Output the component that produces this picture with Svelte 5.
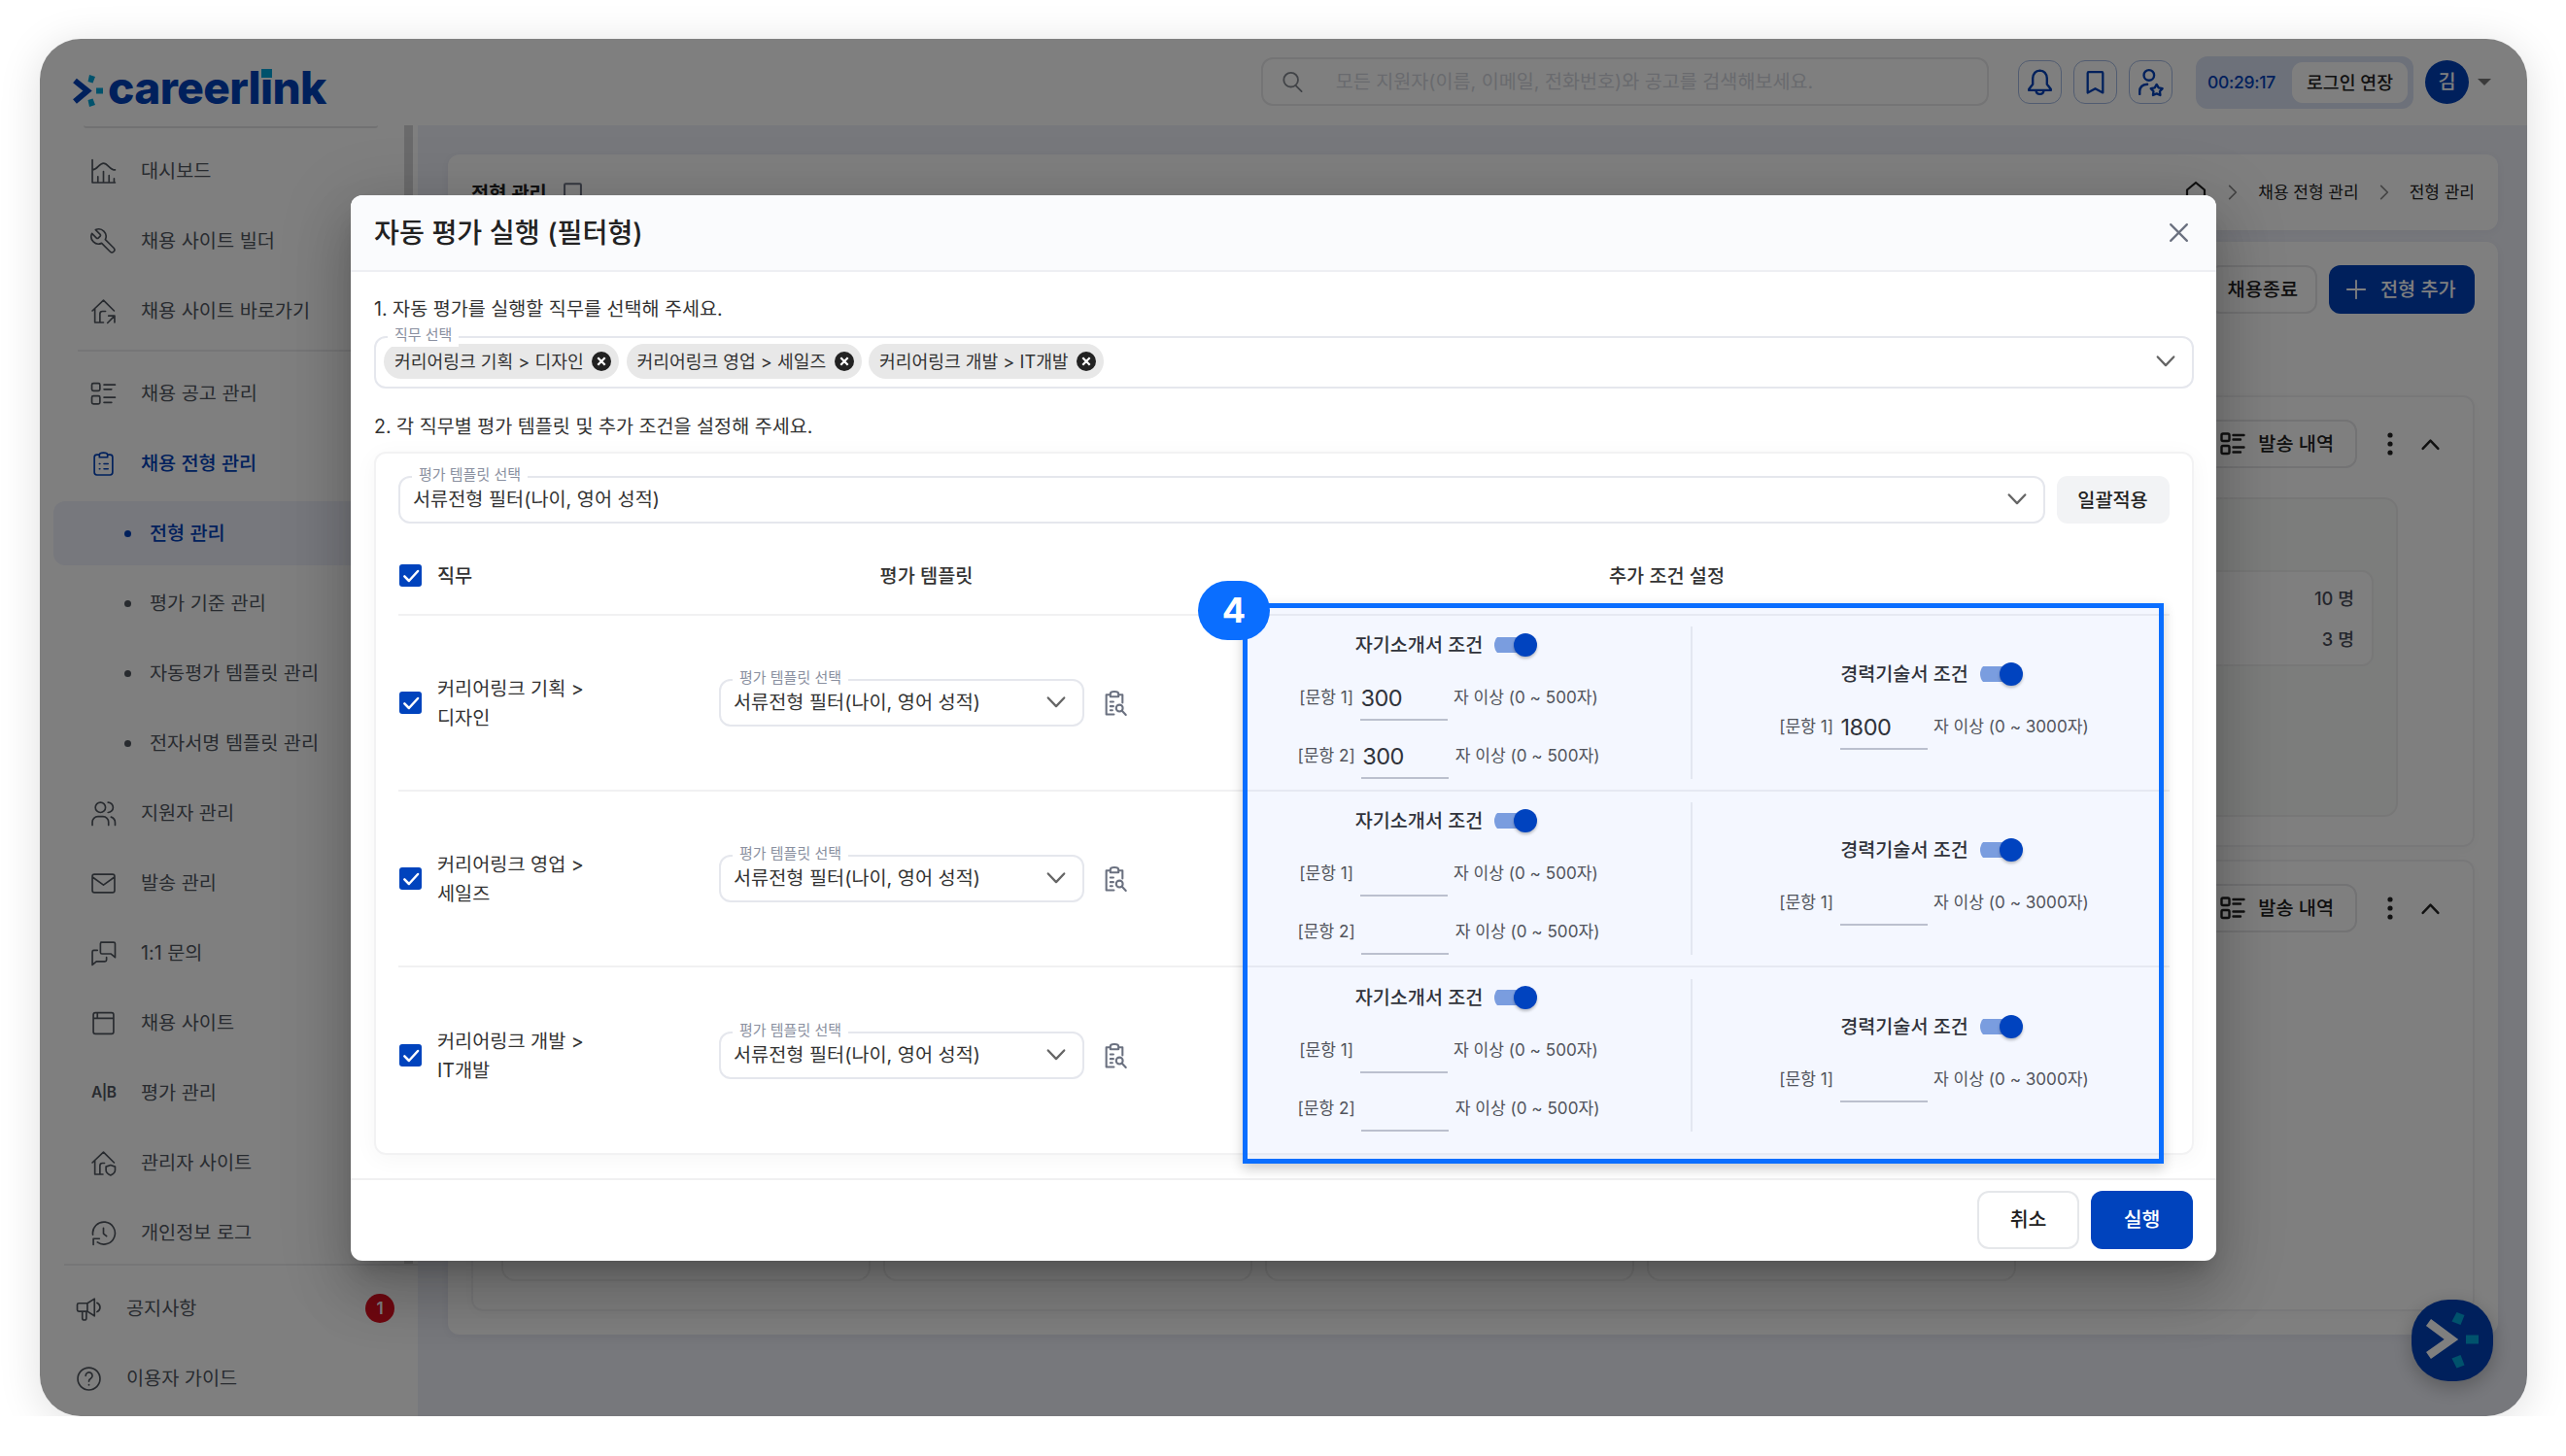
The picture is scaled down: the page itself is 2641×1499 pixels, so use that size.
<script lang="ts">
	type MenuItem = { label: string; icon: string; arrow?: "down" | "up"; active?: boolean };
	type Field = { label: string; value: string };
	type Job = { name: string; group: string; intro: Field[]; career: Field[] };

	const icons: Record<string, string> = {
		chart: "M1 .5V23h22.5M1 10.5C6 10.500 7.500 4 12 4s6 6.500 11.500 6.500M6.500 23v-6M12 23V12M17.500 23v-7M22.500 23v-4",
		wrench: "M8.760 5.160a1.200 1.200 0 0 1 0 1.700L6.840 8.760a1.200 1.200 0 0 1-1.700 0L.6 4.200a7.200 7.200 0 0 0 9.600 9.600l8.300 8.300a2.500 2.500 0 0 0 3.600-3.600l-8.300-8.300a7.200 7.200 0 0 0-9.600-9.600z",
		homeLink: "M1 11.500 12 1l10.500 10.500M3.500 9.500v13.500h8.500M8.500 22.500v-8q0-2.500 2.500-2.500h3M16 23.500l7-7M17 16.500h6v6.500",
		list: "M2 1.500h5q1.500 0 1.500 1.500v4.500q0 1.500-1.500 1.500h-5q-1.500 0-1.500-1.500v-4.500q0-1.500 1.500-1.500zM2 14h5q1.500 0 1.500 1.500v5q0 1.500-1.500 1.500h-5q-1.500 0-1.500-1.500v-5q0-1.500 1.500-1.500zM12.500 3h11M12.500 7.500h7.500M12.500 15.500h11M12.500 20.500h7.500",
		clipboard: "M8 3H5.500Q3 3 3 5.500v15Q3 23 5.500 23h13q2.500 0 2.500-2.500v-15Q21 3 18.500 3H16M8 5.500V3q0-2 4-2t4 2v2.500zM8 12h.5M8 17h.5M12.500 12h4M12.500 17h4",
		users: "M9 1a5 5 0 1 0 0 10a5 5 0 1 0 0-10M1 23.500v-3a5.500 5.500 0 0 1 5.500-5.500h5a5.500 5.500 0 0 1 5.500 5.500v3M16.500 1a5 5 0 0 1 0 10M19.500 15.500q4 1.500 4 5.500v2.500",
		mail: "M3 3h18q2 0 2 2v14q0 2-2 2h-18q-2 0-2-2v-14q0-2 2-2zM1.500 6l10.500 7.500l10.500-7.500",
		chat: "M9.500 1h12.500q1.500 0 1.500 1.500v13.500l-4-3.500h-9q-1.500 0-1.500-1.500v-8.500q0-1.500 1.500-1.500M6 9h-3.500q-1.500 0-1.500 1.500v13l4-3.500h8.500q1.500 0 1.500-1.500v-2.500",
		window: "M4 1.500h16q2 0 2 2v17q0 2-2 2h-16q-2 0-2-2v-17q0-2 2-2zM2 7h20M6 1.500V7",
		homeShield: "M1 11.500 12 1l10.500 10.500M3.500 9.500v13.500h8M8.500 22.500v-8q0-2.500 2.500-2.500h2M19 14l4.500 1.500v3.500q0 3-4.500 5q-4.500-2-4.500-5v-3.500z",
		history: "M1.500 13.500a11 11 0 1 1 4.500 7.500M12 7v5.500l3 2.500M2 23.500v-6h6",
		horn: "M2 6.500h8.500l7-4.500v17l-7-4.500h-8.500q-1.500 0-1.500-1.500v-5q0-1.500 1.500-1.500zM10.500 6.500v8M20 6q3 1.500 3 4.500t-3 4.500M5.500 14.500v6.500q0 2 2 2t2-2v-6.500",
		help: "M12 1a11 11 0 1 0 0 22a11 11 0 1 0 0-22M8.800 9a3.300 3.300 0 1 1 5 2.800q-1.800 1-1.800 2.700M12 17.800v.4",
		bell: "M12 1.500q-6 .5-6.500 7v5.500L2 18.500v1h20v-1L18.500 14V8.500q-.5-6.500-6.500-7zM8.500 19.500q0 3.500 3.500 3.500t3.500-3.500",
		bookmark: "M5.500 2h13q1 0 1 1v19.500L12 18.500l-7.500 4V3q0-1 1-1z",
		userStar: "M10.500 1a4.700 4.700 0 1 0 0 9.400a4.700 4.700 0 1 0 0-9.400M2 23v-2.500q0-6 7-6.500M17.500 14.200l1.800 3 3.500.7-2.400 2.600.4 3.500-3.300-1.500-3.300 1.500.4-3.500-2.400-2.600 3.500-.7z",
		search: "M10.500 2a8 8 0 1 0 0 16a8 8 0 1 0 0-16M16.500 17l6 6",
		preview: "M7 4H3.500v19.500H11M16 4h3.500v8M7.500 6V3q0-2 4-2t4 2v3zM7.500 11h3M7.500 15.500h3M7.500 19.500h2M16.500 14a3.300 3.300 0 1 0 0 6.600a3.300 3.300 0 1 0 0-6.600M19 20l3.800 4",
		home: "M3 24V9.500L12 2l9 7.500V24z",
		plus: "M12 2v20M2 12h20",
		close: "M4 4l16 16M20 4L4 20",
		down: "M3 7l9 9.500L21 7",
		up: "M3 17l9-9.500 9 9.500",
		right: "M8 4l8 8-8 8",
		check: "M4 12.500l5.500 5.500L20.500 6",
	};

	const topMenu: MenuItem[] = [
		{ label: "대시보드", icon: "chart" },
		{ label: "채용 사이트 빌더", icon: "wrench" },
		{ label: "채용 사이트 바로가기", icon: "homeLink" },
	];
	const processMenu: MenuItem[] = [
		{ label: "채용 공고 관리", icon: "list", arrow: "down" },
		{ label: "채용 전형 관리", icon: "clipboard", arrow: "up", active: true },
	];
	const subMenu = ["전형 관리", "평가 기준 관리", "자동평가 템플릿 관리", "전자서명 템플릿 관리"];
	const manageMenu: MenuItem[] = [
		{ label: "지원자 관리", icon: "users", arrow: "down" },
		{ label: "발송 관리", icon: "mail", arrow: "down" },
		{ label: "1:1 문의", icon: "chat", arrow: "down" },
		{ label: "채용 사이트", icon: "window", arrow: "down" },
		{ label: "평가 관리", icon: "ab", arrow: "down" },
		{ label: "관리자 사이트", icon: "homeShield", arrow: "down" },
		{ label: "개인정보 로그", icon: "history", arrow: "down" },
	];

	const template = "서류전형 필터(나이, 영어 성적)";
	let jobs: Job[] = $state([
		{
			group: "커리어링크 기획",
			name: "디자인",
			intro: [{ label: "[문항 1]", value: "300" }, { label: "[문항 2]", value: "300" }],
			career: [{ label: "[문항 1]", value: "1800" }],
		},
		{
			group: "커리어링크 영업",
			name: "세일즈",
			intro: [{ label: "[문항 1]", value: "" }, { label: "[문항 2]", value: "" }],
			career: [{ label: "[문항 1]", value: "" }],
		},
		{
			group: "커리어링크 개발",
			name: "IT개발",
			intro: [{ label: "[문항 1]", value: "" }, { label: "[문항 2]", value: "" }],
			career: [{ label: "[문항 1]", value: "" }],
		},
	]);
</script>

{#snippet icon(name: string, size = 24, stroke = 1.6)}
	<svg class="icon" width={size} height={size} viewBox="0 0 24 24" stroke-width={stroke}>
		<path d={icons[name]} />
	</svg>
{/snippet}

{#snippet menuRow(item: MenuItem)}
	<div class="menuItem" class:active={item.active}>
		{#if item.icon == "ab"}
			<span class="abIcon">A|B</span>
		{:else}
			{@render icon(item.icon, 25)}
		{/if}
		<span class="menuLabel">{item.label}</span>
		{#if item.arrow}
			{@render icon(item.arrow, 18, 2)}
		{/if}
	</div>
{/snippet}

{#snippet cardTools()}
	<div class="tools">
		<button class="outlineBtn historyBtn">{@render icon("list", 24, 2.4)}발송 내역</button>
		<svg class="dots" width="6" height="24" viewBox="0 0 6 24"><circle cx="3" cy="3" r="2.6" /><circle cx="3" cy="12" r="2.6" /><circle cx="3" cy="21" r="2.6" /></svg>
		{@render icon("up", 21, 2.8)}
	</div>
{/snippet}

{#snippet checkbox()}
	<span class="checkbox">{@render icon("check", 20, 3)}</span>
{/snippet}

{#snippet condition(title: string, fields: Field[], max: number)}
	<div class="condition">
		<div class="conditionTitle">
			{title}
			<span class="switch"><span class="thumb"></span></span>
		</div>
		{#each fields as field}
			<div class="field">
				<span>{field.label}</span>
				<input class="fieldInput" bind:value={field.value} />
				<span>자 이상 (0 ~ {max}자)</span>
			</div>
		{/each}
	</div>
{/snippet}

<div class="frame">
	<header class="topbar">
		<div class="logo">
			<svg width="32" height="36" viewBox="0 0 32 36">
				<path d="M2 8L15 18.500L2 29.500" fill="none" stroke="#0041b9" stroke-width="6" />
				<path d="M17 2l6 2-2.500 6.500-5-1.500zM24 15.500h7v6h-7zM15.500 28l5-1.500 2.500 6.500-6 2z" fill="#00a5d8" />
			</svg>
			<span class="logoText">careerl<span class="logoI">i</span>nk</span>
		</div>
		<div class="search">
			{@render icon("search", 22, 2)}
			<span>모든 지원자(이름, 이메일, 전화번호)와 공고를 검색해보세요.</span>
		</div>
		<div class="quick">
			<button class="quickBtn">{@render icon("bell", 27, 2.1)}</button>
			<button class="quickBtn">{@render icon("bookmark", 25, 2.2)}</button>
			<button class="quickBtn">{@render icon("userStar", 27, 2.1)}</button>
		</div>
		<div class="session">
			<span class="timer">00:29:17</span>
			<button class="extend">로그인 연장</button>
		</div>
		<span class="avatar">김</span>
		<span class="caret"></span>
	</header>

	<div class="layout">
		<aside class="sidebar">
			<div class="scrollArea">
				<div class="boxEnd"></div>
				<nav class="menu">
					{#each topMenu as item}
						{@render menuRow(item)}
					{/each}
					<hr />
					{#each processMenu as item}
						{@render menuRow(item)}
					{/each}
					{#each subMenu as label, i}
						<div class="subItem" class:selected={i == 0}><span class="bullet"></span>{label}</div>
					{/each}
					{#each manageMenu as item}
						{@render menuRow(item)}
					{/each}
				</nav>
				<span class="scrollbar"></span>
			</div>
			<div class="sideFooter">
				<div class="menuItem">{@render icon("horn", 25)}<span class="menuLabel">공지사항</span><span class="count">1</span></div>
				<div class="menuItem">{@render icon("help", 25)}<span class="menuLabel">이용자 가이드</span></div>
			</div>
		</aside>

		<main class="content">
			<section class="card pageHead">
				<h2>전형 관리</h2>
				<span class="pageMark">{@render icon("bookmark", 27, 1.8)}</span>
				<div class="crumbs">
					{@render icon("home", 24, 2.2)}
					<span class="crumbArrow">{@render icon("right", 20, 2)}</span>
					<span>채용 전형 관리</span>
					<span class="crumbArrow">{@render icon("right", 20, 2)}</span>
					<span>전형 관리</span>
				</div>
			</section>
			<section class="card pageBody">
				<div class="toolbar">
					<button class="outlineBtn">채용종료</button>
					<button class="addBtn">{@render icon("plus", 22, 2)}전형 추가</button>
				</div>
				<div class="stage">
					{@render cardTools()}
					<div class="boxes">
						{#each Array(4) as _}
							<div class="box"></div>
						{/each}
						<div class="box green">
							<div class="counts"><span>10 명</span><span>3 명</span></div>
						</div>
					</div>
				</div>
				<div class="stage">
					{@render cardTools()}
					<div class="boxes">
						{#each Array(4) as _}
							<div class="box"></div>
						{/each}
					</div>
				</div>
			</section>
		</main>
	</div>

	<div class="chatBtn">
		<svg width="84" height="84" viewBox="0 0 84 84">
			<path d="M17.500 23.500L41 41L17.500 57.500" fill="none" stroke="#fff" stroke-width="8.500" />
			<path d="M46.500 13l8 3-4 10-9-3.500zM56 36.500h13v9h-13zM41.500 60.500l9-3.500 4 10.500-8 3z" fill="#00a5d8" />
		</svg>
	</div>

	<div class="backdrop">
		<div class="modal">
			<div class="modalHead">
				<h1>자동 평가 실행 (필터형)</h1>
				{@render icon("close", 25, 2.2)}
			</div>
			<div class="modalBody">
				<p>1. 자동 평가를 실행할 직무를 선택해 주세요.</p>
				<div class="select jobSelect">
					<span class="floatLabel">직무 선택</span>
					{#each jobs as job}
						<span class="chip">
							{job.group} &gt; {job.name}
							<svg class="chipClose" width="20" height="20" viewBox="0 0 20 20"><circle cx="10" cy="10" r="10" /><path d="M6.300 6.300l7.400 7.400M13.700 6.300l-7.400 7.400" /></svg>
						</span>
					{/each}
					<span class="selectArrow">{@render icon("down", 22, 2.5)}</span>
				</div>
				<p class="second">2. 각 직무별 평가 템플릿 및 추가 조건을 설정해 주세요.</p>
				<div class="panel">
					<div class="applyRow">
						<div class="select">
							<span class="floatLabel">평가 템플릿 선택</span>
							<span class="selectValue">{template}</span>
							<span class="selectArrow">{@render icon("down", 22, 2.5)}</span>
						</div>
						<button class="applyBtn">일괄적용</button>
					</div>
					<div class="row headRow">
						{@render checkbox()}
						<span>직무</span>
						<span class="center">평가 템플릿</span>
						<span class="center lastHead">추가 조건 설정</span>
					</div>
					{#each jobs as job}
						<div class="row">
							{@render checkbox()}
							<span class="jobName">{job.group} &gt; {job.name}</span>
							<div class="templateCell">
								<div class="select">
									<span class="floatLabel">평가 템플릿 선택</span>
									<span class="selectValue">{template}</span>
									<span class="selectArrow">{@render icon("down", 22, 2.5)}</span>
								</div>
								{@render icon("preview", 25, 2)}
							</div>
							<div class="conditions">
								{@render condition("자기소개서 조건", job.intro, 500)}
								{@render condition("경력기술서 조건", job.career, 3000)}
							</div>
						</div>
					{/each}
				</div>
			</div>
			<div class="modalFoot">
				<button class="cancelBtn">취소</button>
				<button class="runBtn">실행</button>
			</div>
			<div class="highlight"><span class="step">4</span></div>
		</div>
	</div>
</div>

<style>
	:global(body) {
		background: #fff;
		overflow: hidden;
	}

	.frame, .frame :global(*) {
		box-sizing: border-box;
	}

	.frame {
		position: relative;
		width: 2560px;
		height: 1418px;
		margin: 40px 0 0 41px;
		border-radius: 42px;
		overflow: hidden;
		display: flex;
		flex-direction: column;
		background: #fff;
		box-shadow: 0 6px 44px rgba(0, 0, 0, 0.13);
		font-family: Inter, "Noto Sans CJK KR", sans-serif;
		font-size: 19.700px;
		line-height: 30px;
		color: #222;
	}

	button, input {
		font: inherit;
		color: inherit;
		margin: 0;
		border: 0;
		background: none;
	}

	h1, h2, p {
		margin: 0;
		font-weight: 500;
	}

	p {
		font-size: 19.600px;
		font-weight: 400;
	}

	.icon {
		display: block;
		flex: none;
		fill: none;
		stroke: currentColor;
		stroke-linecap: round;
		stroke-linejoin: round;
		overflow: visible;
	}

	/* top bar */
	.topbar {
		height: 89px;
		flex: none;
		display: flex;
		align-items: center;
		padding: 0 37px 0 34px;
	}

	.logo {
		display: flex;
		align-items: center;
		width: 1223px;
		padding-top: 16px;
	}

	.logoText {
		margin: -5px 0 0 4px;
		font-size: 46px;
		font-weight: 800;
		letter-spacing: -0.600px;
		color: #0041b9;
	}

	.logoI {
		position: relative;
	}

	.logoI::before {
		content: "";
		position: absolute;
		left: 1px;
		top: 9px;
		width: 11px;
		height: 9px;
		background: #00a5d8;
	}

	.search {
		width: 749px;
		height: 50px;
		display: flex;
		align-items: center;
		gap: 34px;
		padding: 0 19px;
		margin-top: -2px;
		border: 2px solid #e8e8ea;
		border-radius: 12px;
		font-size: 19.600px;
		color: #d2d5dc;
	}

	.search .icon {
		color: #83878f;
	}

	.quick {
		display: flex;
		gap: 11.500px;
		margin: 0 24px 0 30px;
	}

	.quickBtn {
		width: 45.500px;
		height: 45.500px;
		display: grid;
		place-items: center;
		padding: 0;
		border: 1.500px solid #a3b9e2;
		border-radius: 12px;
		color: #0041b9;
	}

	.session {
		width: 224px;
		height: 54px;
		display: flex;
		align-items: center;
		justify-content: space-between;
		padding: 0 6px 0 12px;
		border-radius: 12px;
		background: #dbe2f4;
	}

	.timer {
		font-size: 17.500px;
		font-weight: 500;
		letter-spacing: -0.300px;
		color: #0041b9;
	}

	.extend {
		width: 119px;
		height: 42px;
		padding: 0;
		border-radius: 11px;
		background: #fff;
		font-size: 18.300px;
		font-weight: 500;
	}

	.avatar {
		width: 45px;
		height: 45px;
		margin: 0 9px 0 12px;
		border-radius: 50%;
		background: #0041b9;
		color: #fff;
		font-weight: 500;
		line-height: 44px;
		text-align: center;
	}

	.caret {
		border: 7px solid transparent;
		border-top-color: #777;
		border-bottom: 0;
	}

	.layout {
		flex: 1;
		display: flex;
		min-height: 0;
	}

	/* sidebar */
	.sidebar {
		width: 389px;
		flex: none;
		color: #50565f;
		background: #fff;
	}

	.scrollArea {
		position: relative;
		height: 1172px;
	}

	.boxEnd {
		width: 303px;
		height: 3px;
		margin-left: 45px;
		border-bottom: 2px solid #e2e2e4;
		border-radius: 0 0 10px 10px;
	}

	.menu {
		display: flex;
		flex-direction: column;
		padding: 8px 22px 0 14px;
	}

	.menuItem {
		height: 72px;
		flex: none;
		display: flex;
		align-items: center;
		gap: 26px;
		padding: 0 24px 0 39px;
	}

	.menuLabel {
		flex: 1;
		white-space: nowrap;
	}

	.menuItem.active, .subItem.selected {
		color: #0041b9;
		font-weight: 500;
	}

	.abIcon {
		width: 25px;
		font-size: 15.500px;
		font-weight: 600;
		letter-spacing: -0.500px;
	}

	hr {
		width: 329px;
		height: 2px;
		margin: 4px 0 7px 25px;
		border: 0;
		background: #ececee;
	}

	.subItem {
		height: 66px;
		flex: none;
		margin: 3px 0;
		display: flex;
		align-items: center;
		gap: 19px;
		padding-left: 73px;
		border-radius: 12px;
		white-space: nowrap;
	}

	.subItem.selected {
		background: #eef0fb;
	}

	.bullet {
		width: 7px;
		height: 7px;
		border-radius: 50%;
		background: currentColor;
	}

	.scrollbar {
		position: absolute;
		top: 0;
		right: 5px;
		width: 9px;
		height: 100%;
		background: #d5d5d7;
	}

	.sideFooter {
		margin-left: 25px;
		padding-top: 8px;
		border-top: 2px solid #ececee;
	}

	.sideFooter .menuItem {
		padding: 0 24px 0 13px;
	}

	.count {
		width: 30px;
		height: 30px;
		border-radius: 50%;
		background: #df1020;
		color: #fff;
		font-size: 17px;
		font-weight: 600;
		text-align: center;
	}

	/* page behind the dialog */
	.content {
		flex: 1;
		display: flex;
		flex-direction: column;
		gap: 12px;
		padding: 30px 30px 84px 31px;
		background: #eff1f9;
	}

	.card {
		border-radius: 12px;
		background: #fff;
		box-shadow: 0 2px 12px rgba(30, 40, 80, 0.06);
	}

	.pageHead {
		height: 78px;
		display: flex;
		align-items: center;
		padding: 0 24px;
	}

	h2 {
		padding-top: 2px;
		font-size: 19.800px;
		font-weight: 600;
	}

	.pageMark {
		margin-left: 13px;
		padding-top: 4px;
		color: #6b7080;
	}

	.crumbs {
		display: flex;
		align-items: center;
		gap: 16px;
		margin-left: auto;
		font-size: 17px;
	}

	.crumbArrow {
		color: #888;
	}

	.pageBody {
		flex: 1;
		display: flex;
		flex-direction: column;
		gap: 13px;
		padding: 24px;
	}

	.toolbar {
		display: flex;
		justify-content: flex-end;
		gap: 12px;
		margin-bottom: 71px;
	}

	.outlineBtn {
		height: 50px;
		padding: 0 18px;
		border: 2px solid #e6e6e9;
		border-radius: 12px;
		font-weight: 500;
	}

	.addBtn {
		width: 150px;
		height: 50px;
		display: flex;
		align-items: center;
		gap: 14px;
		padding: 0 17px;
		border-radius: 12px;
		background: #0041b9;
		color: #fff;
		font-weight: 500;
	}

	.stage {
		flex: 1;
		display: flex;
		flex-direction: column;
		gap: 30px;
		padding: 23px 30px 29px 29px;
		border: 2px solid #f0f0f2;
		border-radius: 12px;
		box-shadow: 0 3px 14px rgba(0, 0, 0, 0.03);
	}

	.tools {
		display: flex;
		justify-content: flex-end;
		align-items: center;
		padding-right: 3px;
	}

	.historyBtn {
		display: flex;
		align-items: center;
		gap: 14px;
		padding: 0 22px;
	}

	.dots {
		margin: 0 28px 0 31px;
		fill: #222;
	}

	.boxes {
		flex: 1;
		display: grid;
		grid-template-columns: repeat(5, 380px);
		gap: 13px;
	}

	.box {
		border: 2px solid #efefef;
		border-radius: 14px;
	}

	.box.green {
		padding: 73px 23px 0;
		background: #f8fbf9;
	}

	.counts {
		height: 99px;
		display: flex;
		flex-direction: column;
		align-items: flex-end;
		justify-content: center;
		gap: 12px;
		padding-right: 18px;
		border: 2px solid #f0f0f0;
		border-radius: 12px;
		background: #fff;
		font-size: 18.300px;
		font-weight: 500;
		color: #4a4f5a;
	}

	.chatBtn {
		position: absolute;
		right: 35px;
		bottom: 36px;
		width: 84px;
		height: 84px;
		border-radius: 38px;
		background: #0041b9;
		box-shadow: 0 6px 20px rgba(0, 0, 0, 0.25);
	}

	/* dialog */
	.backdrop {
		position: absolute;
		inset: 0;
		display: flex;
		align-items: center;
		justify-content: center;
		background: rgba(0, 0, 0, 0.5);
	}

	.modal {
		position: relative;
		width: 1920px;
		height: 1097px;
		display: flex;
		flex-direction: column;
		border-radius: 12px;
		background: #fff;
		box-shadow: 0 16px 22px -10px rgba(0, 0, 0, 0.2), 0 36px 57px 4px rgba(0, 0, 0, 0.14), 0 13px 69px 12px rgba(0, 0, 0, 0.12);
	}

	.modalHead {
		height: 79px;
		flex: none;
		display: flex;
		align-items: center;
		justify-content: space-between;
		padding: 0 26px 0 24px;
		border-bottom: 2px solid #eeeff3;
		border-radius: 12px 12px 0 0;
		background: #fafbfd;
		color: #6b7180;
	}

	h1 {
		padding-top: 2px;
		font-size: 28.200px;
		color: #222;
	}

	.modalBody {
		flex: 1;
		padding: 23px 23.500px 0 24px;
		color: #333;
	}

	.second {
		margin-top: 24px;
	}

	.select {
		position: relative;
		flex: 1;
		height: 49px;
		display: flex;
		align-items: center;
		padding: 0 16px 1px 13px;
		border: 2px solid #e5e7ed;
		border-radius: 12px;
		color: #333;
	}

	.jobSelect {
		height: 54px;
		gap: 7.500px;
		margin-top: 13px;
		padding: 0 16px 1px 8px;
	}

	.floatLabel {
		position: absolute;
		top: -15px;
		left: 12px;
		padding: 0 7px;
		background: #fff;
		font-size: 15px;
		line-height: 24px;
		color: #8a90a0;
	}

	.selectArrow {
		margin-left: auto;
		color: #666;
	}

	.chip {
		width: 242px;
		height: 36px;
		display: flex;
		align-items: center;
		justify-content: space-between;
		padding: 0 8px 0 11px;
		border-radius: 18px;
		background: #e8e8e8;
		font-size: 18.200px;
		white-space: nowrap;
	}

	.chipClose {
		fill: #222;
	}

	.chipClose path {
		stroke: #fff;
		stroke-width: 2.200;
	}

	.panel {
		height: 724px;
		margin-top: 11.500px;
		padding: 23px 23px 0;
		border: 2px solid #f2f2f3;
		border-radius: 12px;
		box-shadow: 0 4px 24px rgba(0, 0, 0, 0.04);
	}

	.applyRow {
		display: flex;
		gap: 12px;
	}

	.applyBtn {
		width: 116px;
		height: 49px;
		padding: 0;
		border-radius: 11px;
		background: #f2f3f5;
		font-weight: 500;
		color: #222;
	}

	.row {
		height: 181px;
		display: grid;
		grid-template-columns: 40px 216px 575px 990px;
		align-items: center;
		border-bottom: 2px solid #f1f1f2;
	}

	.row:last-child {
		border: 0;
	}

	.headRow {
		height: 81px;
		margin-top: 14px;
		font-weight: 500;
	}

	.checkbox {
		width: 23px;
		height: 23px;
		margin-left: 1px;
		display: grid;
		place-items: center;
		border-radius: 3px;
		background: #0043bd;
		color: #fff;
	}

	.center {
		text-align: center;
	}

	.lastHead {
		padding-right: 41px;
	}

	.jobName {
		width: 160px;
		word-break: keep-all;
		color: #333;
	}

	.templateCell {
		display: flex;
		align-items: center;
		gap: 19px;
		padding: 0 81px 0 74px;
		color: #6b7180;
	}

	.conditions {
		height: 157px;
		display: grid;
		grid-template-columns: 499px 491px;
	}

	.condition {
		display: flex;
		flex-direction: column;
		align-items: center;
		justify-content: center;
		gap: 12px;
	}

	.condition:first-child {
		padding-left: 1px;
	}

	.condition + .condition {
		padding-left: 8px;
		border-left: 2px solid #eeeff1;
	}

	.conditionTitle {
		height: 37px;
		display: flex;
		align-items: center;
		gap: 12px;
		padding-right: 5px;
		font-size: 19.600px;
		font-weight: 500;
	}

	.switch {
		width: 44px;
		height: 24px;
		display: flex;
		align-items: center;
		justify-content: flex-end;
		border-radius: 12px;
		background: linear-gradient(#80a1de, #80a1de) left / 32px 16px no-repeat;
		clip-path: inset(-6px round 10px);
	}

	.thumb {
		width: 24px;
		height: 24px;
		border-radius: 50%;
		background: #0043bd;
		box-shadow: 0 2px 3px rgba(0, 0, 0, 0.25);
	}

	.field {
		height: 48px;
		display: flex;
		align-items: center;
		gap: 6.500px;
		font-size: 17.100px;
		color: #555;
	}

	.fieldInput {
		width: 90px;
		height: 48px;
		padding: 2px 1px 0;
		border-bottom: 2px solid #c4c6cc;
		font-size: 23.500px;
		letter-spacing: -0.500px;
		color: #333;
	}

	.modalFoot {
		height: 85px;
		display: flex;
		align-items: center;
		justify-content: flex-end;
		gap: 12px;
		padding: 0 24px;
		border-top: 2px solid #f0f0f1;
	}

	.cancelBtn, .runBtn {
		width: 105px;
		height: 60px;
		padding: 0;
		border-radius: 12px;
		font-size: 20.500px;
		font-weight: 500;
	}

	.cancelBtn {
		border: 2px solid #e5e7ea;
	}

	.runBtn {
		background: #0043bd;
		color: #fff;
	}

	/* step marker over the condition columns */
	.highlight {
		position: absolute;
		left: 918px;
		top: 420px;
		width: 948px;
		height: 577px;
		border: 5px solid #0a6eff;
		background: rgba(10, 80, 255, 0.045);
		box-shadow: 0 5px 12px rgba(0, 0, 0, 0.2);
	}

	.step {
		position: absolute;
		left: -51px;
		top: -28px;
		width: 74px;
		height: 61px;
		border-radius: 31px;
		background: #0a6eff;
		color: #fff;
		font-size: 36px;
		font-weight: 700;
		line-height: 61px;
		text-align: center;
	}
</style>
